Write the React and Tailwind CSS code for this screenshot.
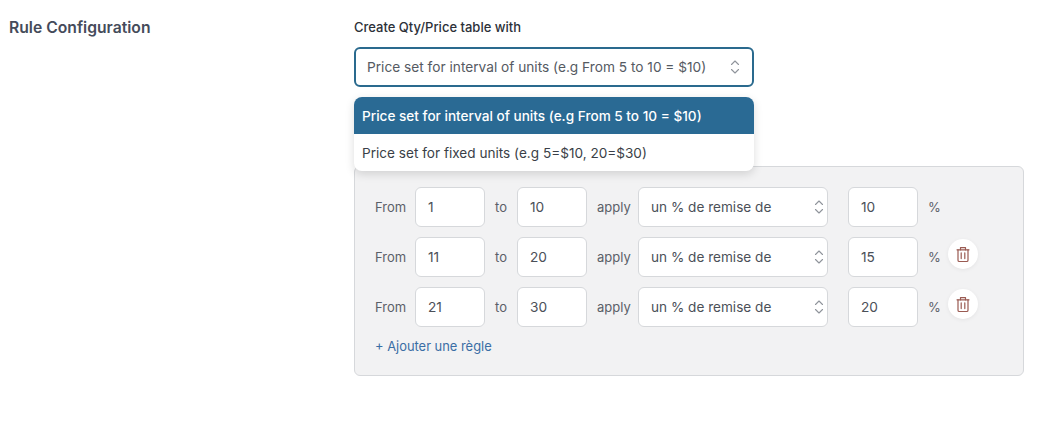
import React from 'react';

const Chevrons = ({ className }) => (
  <svg width="12" height="18" viewBox="0 0 12 18" fill="none" stroke="currentColor" strokeWidth="1.1" strokeLinecap="round" strokeLinejoin="round" className={className}>
    <path d="M2.5 6.5 6 3l3.5 3.5" />
    <path d="M2.5 11.5 6 15l3.5-3.5" />
  </svg>
);

const Trash = () => (
  <svg width="16" height="17" viewBox="0 0 16 17" fill="none" stroke="#9a5a52" strokeWidth="1.2" strokeLinecap="round" strokeLinejoin="round">
    <path d="M2 3.8h12" />
    <path d="M5.5 3.8V1.6h5v2.2" />
    <path d="M3 3.8V14.2c0 .8.5 1.3 1.3 1.3h7.4c.8 0 1.3-.5 1.3-1.3V3.8" />
    <path d="M6.2 6.8v5.8M9.8 6.8v5.8" />
  </svg>
);

const NumInput = ({ value }) => (
  <div className="w-[70px] h-10 shrink-0 bg-white border border-[#d6d8db] rounded-md flex items-center pl-[12px] text-[13.7px] text-[#4b5058]">
    {value}
  </div>
);

const rows = [
  { from: '1', to: '10', amount: '10', removable: false },
  { from: '11', to: '20', amount: '15', removable: true },
  { from: '21', to: '30', amount: '20', removable: true },
];

const RuleRow = ({ row }) => (
  <div className="flex items-center h-10 text-[13px] text-[#5b6068]">
    <span className="w-10 shrink-0 pt-[2px]">From</span>
    <NumInput value={row.from} />
    <span className="w-8 shrink-0 pl-[10px] pt-[2px]">to</span>
    <NumInput value={row.to} />
    <span className="w-[51px] shrink-0 pl-[10px] pt-[2px]">apply</span>
    <div className="w-[190px] h-10 shrink-0 bg-white border border-[#d6d8db] rounded-md flex items-center justify-between pl-[12px] pr-[2px] text-[13.6px] text-[#4b5058]">
      <span>un % de remise de</span>
      <Chevrons className="text-[#8f949b]" />
    </div>
    <div className="w-5 shrink-0" />
    <NumInput value={row.amount} />
    <span className="w-[30px] shrink-0 pl-[10px] pt-[2px]">%</span>
    {row.removable && (
      <button className="w-[30px] h-[30px] -mt-[6px] rounded-full bg-white flex items-center justify-center shadow-[0_1px_4px_rgba(0,0,0,0.06)]">
        <Trash />
      </button>
    )}
  </div>
);

export default function App() {
  return (
    <div className="w-[1052px] h-[428px] bg-white overflow-hidden flex font-['Inter',sans-serif]">
      <div className="w-[354px] shrink-0 pl-[9px] pt-[18px]">
        <h2 className="text-[15.7px] leading-5 font-semibold text-[#454b5a]">Rule Configuration</h2>
      </div>
      <div className="w-[670px] pt-[19px]">
        <label className="block text-[13px] leading-4 font-medium text-[#2c3038]">Create Qty/Price table with</label>
        <div className="relative mt-3 w-[400px]">
          <div className="h-10 bg-white border-2 border-[#2a6a8e] rounded-md flex items-center justify-between pl-[11px] pr-[11px] text-[13.7px] text-[#555a62]">
            <span className="pt-[1px]">Price set for interval of units (e.g From 5 to 10 = $10)</span>
            <Chevrons className="text-[#8f949b]" />
          </div>
          <ul className="absolute z-10 top-[50px] left-0 w-[400px] bg-white rounded-lg overflow-hidden shadow-[0_3px_10px_rgba(0,0,0,0.14)] text-[13.6px]">
            <li className="h-[37px] flex items-center px-2 pt-[1px] bg-[#2a6a94] text-white font-medium">Price set for interval of units (e.g From 5 to 10 = $10)</li>
            <li className="h-[37px] flex items-center px-2 pt-[1px] text-[#3a3f47]">Price set for fixed units (e.g 5=$10, 20=$30)</li>
          </ul>
        </div>
        <div className="mt-[79px] h-[210px] bg-[#f2f2f3] border border-[#d6d8db] rounded-md pt-5 pl-5">
          <div className="flex flex-col gap-2.5">
            {rows.map(row => <RuleRow key={row.from} row={row} />)}
          </div>
          <a className="block mt-[12px] text-[12.9px] leading-4 text-[#3a6ea5]">+ Ajouter une règle</a>
        </div>
      </div>
    </div>
  );
}
